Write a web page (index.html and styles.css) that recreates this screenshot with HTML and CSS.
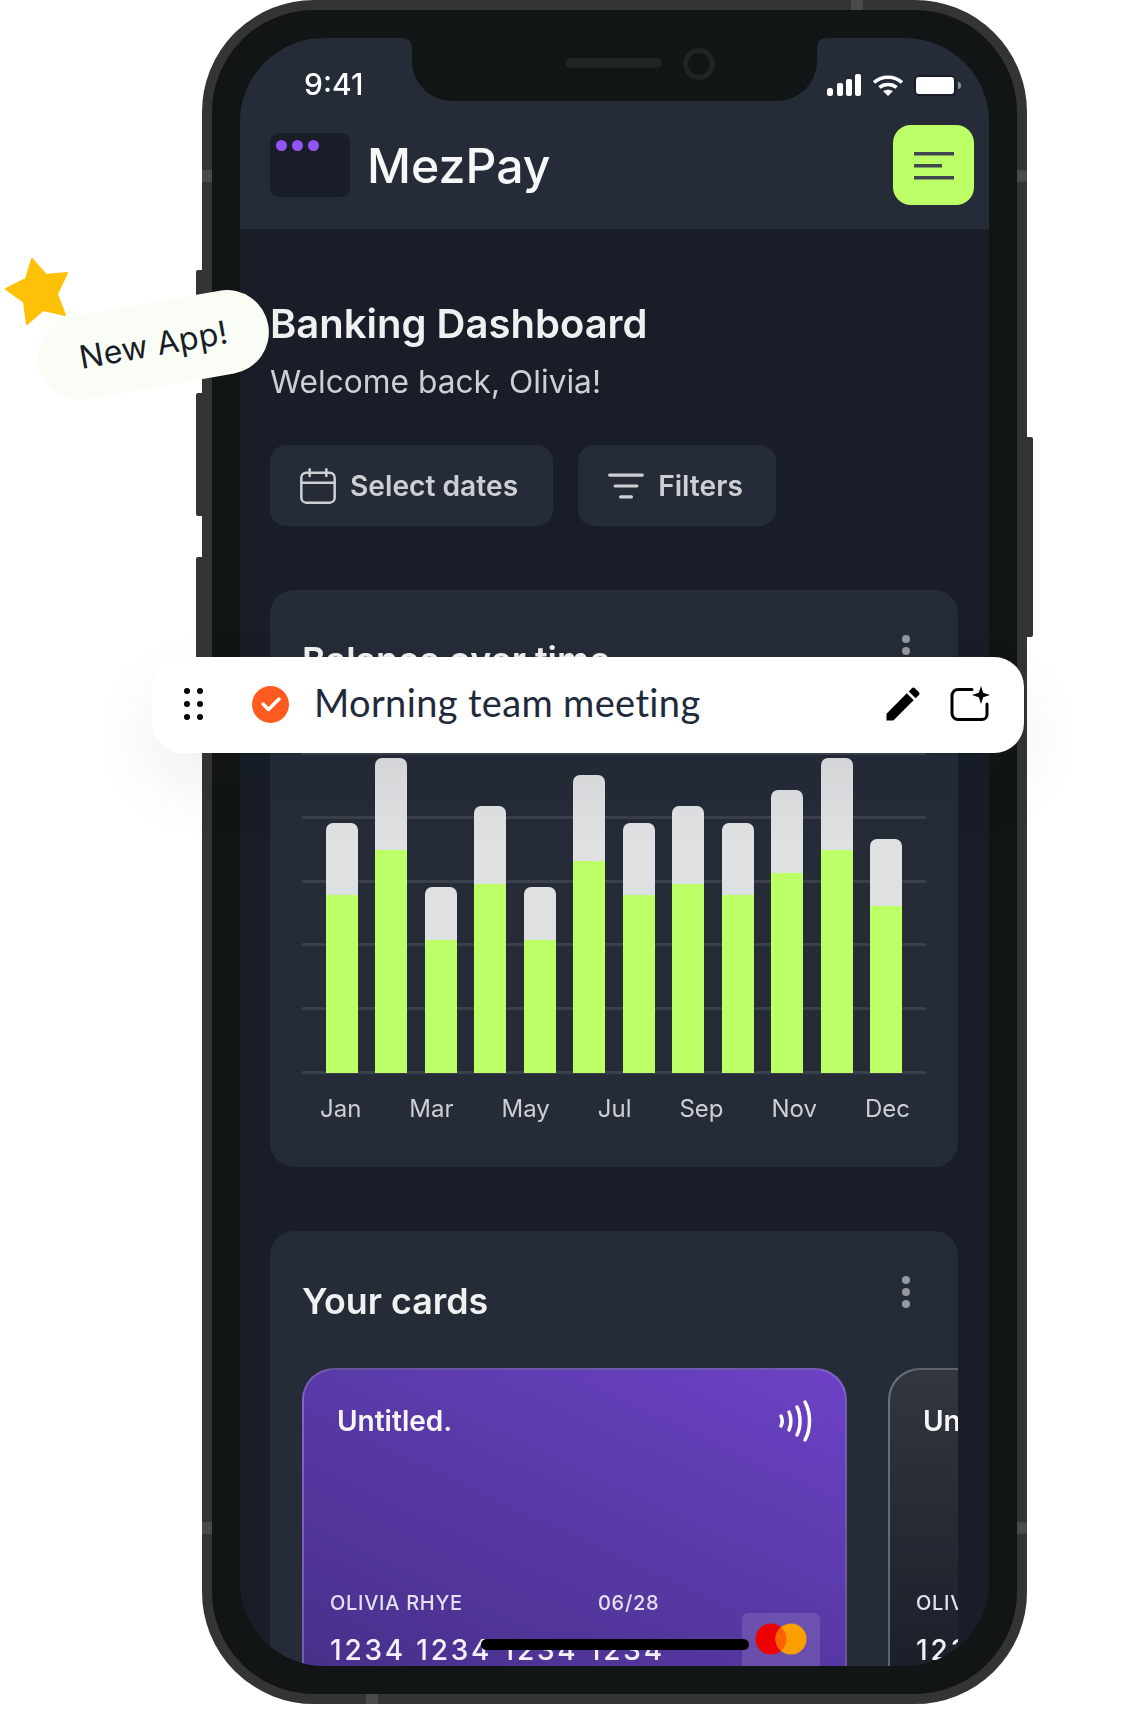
FILE: index.html
```html
<!doctype html>
<html lang="en">
  <head>
    <meta charset="UTF-8" />
    <meta name="viewport" content="width=device-width, initial-scale=1.0" />
    <link rel="stylesheet" href="styles.css">
    <title>MezPay</title>
  </head>
  <body>
    <div class="stage">
      <div class="phone">
        <span class="side side-a"></span>
        <span class="side side-b"></span>
        <span class="side side-c"></span>
        <span class="side side-d"></span>
        <span class="mark mark-top"></span>
        <span class="mark mark-bottom"></span>
        <span class="mark mark-l1"></span>
        <span class="mark mark-l2"></span>
        <span class="mark mark-r1"></span>
        <span class="mark mark-r2"></span>

        <div class="screen">
          <div class="notch">
            <span class="speaker"></span>
            <span class="camera"></span>
          </div>

          <header class="top">
            <div class="status">
              <span class="time">9:41</span>
              <div class="status-icons">
                <svg width="35" height="23" viewBox="0 0 35 23" fill="#fff">
                  <rect x="0" y="14" width="6" height="8" rx="2.5" />
                  <rect x="10" y="9" width="6" height="13" rx="2" />
                  <rect x="19" y="5" width="6" height="17" rx="2" />
                  <rect x="28" y="0" width="6" height="22" rx="2" />
                </svg>
                <svg width="32" height="23" viewBox="0 0 32 23" fill="none" stroke="#fff" stroke-width="3.6">
                  <path d="M2 8.500C9.500 1.500 22.500 1.500 30 8.500" />
                  <path d="M7.500 13.500C12 9.500 20 9.500 24.500 13.500" />
                  <path d="M16 22l-4.800-4.700c2.800-2 6.800-2 9.600 0L16 22z" fill="#fff" stroke="none" />
                </svg>
                <span class="battery"></span>
              </div>
            </div>
            <div class="brand-row">
              <div class="logo">
                <span></span><span></span><span></span>
              </div>
              <span class="brand">MezPay</span>
              <button class="menu">
                <svg width="40" height="30" viewBox="0 0 40 30" fill="#414651">
                  <rect x="0" y="2" width="40" height="3.500" />
                  <rect x="0" y="14" width="28" height="3.500" />
                  <rect x="0" y="26" width="40" height="3.500" />
                </svg>
              </button>
            </div>
          </header>

          <main class="content">
            <h1 class="title">Banking Dashboard</h1>
            <p class="subtitle">Welcome back, Olivia!</p>

            <div class="actions">
              <button class="action">
                <svg width="40" height="40" viewBox="0 0 24 24" fill="none" stroke="#cecfd2" stroke-width="1.500" stroke-linecap="round" stroke-linejoin="round">
                  <rect x="2" y="4" width="20" height="18" rx="3" />
                  <path d="M22 10H2M17 2v4M7 2v4" />
                </svg>
                Select dates
              </button>
              <button class="action">
                <svg width="40" height="40" viewBox="1 1 22 22" fill="none" stroke="#cecfd2" stroke-width="1.700" stroke-linecap="round">
                  <path d="M6 12h12M3 6h18M9 18h6" />
                </svg>
                Filters
              </button>
            </div>

            <section class="panel">
              <div class="panel-head">
                <h2 class="panel-title">Balance over time</h2>
                <span class="more"><i></i><i></i><i></i></span>
              </div>

              <div class="chart">
                <div class="grid">
                  <span></span><span></span><span></span><span></span><span></span><span></span>
                </div>
                <div class="bars">
                  <div class="bar" style="height:250px"><div class="fill" style="height:178px"></div></div>
                  <div class="bar" style="height:315px"><div class="fill" style="height:223px"></div></div>
                  <div class="bar" style="height:186px"><div class="fill" style="height:133px"></div></div>
                  <div class="bar" style="height:267px"><div class="fill" style="height:189px"></div></div>
                  <div class="bar" style="height:186px"><div class="fill" style="height:133px"></div></div>
                  <div class="bar" style="height:298px"><div class="fill" style="height:212px"></div></div>
                  <div class="bar" style="height:250px"><div class="fill" style="height:178px"></div></div>
                  <div class="bar" style="height:267px"><div class="fill" style="height:189px"></div></div>
                  <div class="bar" style="height:250px"><div class="fill" style="height:178px"></div></div>
                  <div class="bar" style="height:283px"><div class="fill" style="height:200px"></div></div>
                  <div class="bar" style="height:315px"><div class="fill" style="height:223px"></div></div>
                  <div class="bar" style="height:234px"><div class="fill" style="height:167px"></div></div>
                </div>
              </div>

              <div class="months">
                <span>Jan</span><span>Mar</span><span>May</span><span>Jul</span><span>Sep</span><span>Nov</span><span>Dec</span>
              </div>
            </section>

            <section class="panel panel-cards">
              <div class="panel-head">
                <h2 class="panel-title">Your cards</h2>
                <span class="more"><i></i><i></i><i></i></span>
              </div>

              <div class="cards">
                <div class="card card-purple">
                  <div class="card-top">
                    <span class="card-name">Untitled.</span>
                    <svg width="36" height="44" viewBox="0 0 36 44" fill="none" stroke="#fff" stroke-width="3.500" stroke-linecap="round">
                      <path d="M3 17c1.500 3 1.500 7 0 10" />
                      <path d="M11 13c2.500 5 2.500 13 0 18" />
                      <path d="M19 8c4 8 4 20 0 28" />
                      <path d="M27 3c6 11 6 27 0 38" />
                    </svg>
                  </div>
                  <div class="card-meta">
                    <span class="holder">OLIVIA RHYE</span>
                    <span>06/28</span>
                  </div>
                  <div class="card-number">1234 1234 1234 1234</div>
                  <div class="card-brand">
                    <svg width="52" height="32" viewBox="0 0 52 32">
                      <circle cx="16" cy="16" r="15.500" fill="#ee0000" />
                      <circle cx="36" cy="16" r="15.500" fill="#f9a000" />
                      <path d="M26 4.200a15.500 15.500 0 0 1 0 23.600a15.500 15.500 0 0 1 0-23.600z" fill="#ff6100" />
                    </svg>
                  </div>
                </div>

                <div class="card card-dark">
                  <div class="card-top">
                    <span class="card-name">Untitled.</span>
                  </div>
                  <div class="card-meta">
                    <span class="holder">OLIVIA RHYE</span>
                  </div>
                  <div class="card-number">1234 1234 1234 1234</div>
                </div>
              </div>
            </section>
          </main>

          <span class="home-bar"></span>
        </div>
      </div>

      <!-- floating bits on top of the phone -->
      <svg class="star" width="70" height="70" viewBox="0 0 70 70">
        <polygon points="32,19 46,35 67,33 57,54 65,75 43,70 27,84 24,62 6,49 26,39" fill="#ffc107" stroke="#ffc107" stroke-width="2" stroke-linejoin="round" transform="translate(0,-17)" />
      </svg>
      <div class="badge">New App!</div>

      <div class="task">
        <span class="grip">
          <i></i><i></i><i></i><i></i><i></i><i></i>
        </span>
        <span class="check">
          <svg width="22" height="16" viewBox="0 0 22 16" fill="none" stroke="#fff" stroke-width="3.500" stroke-linecap="round" stroke-linejoin="round">
            <path d="M3 8l5.500 5.500L19 3" />
          </svg>
        </span>
        <span class="task-text">Morning team meeting</span>
        <svg class="task-edit" width="44" height="44" viewBox="0 0 24 24" fill="#000">
          <path d="M3 17.250V21h3.750L17.810 9.940l-3.750-3.750L3 17.250zM20.710 7.040c.39-.39.39-1.020 0-1.410l-2.340-2.340c-.39-.39-1.020-.39-1.410 0l-1.830 1.830 3.750 3.750 1.830-1.830z" />
        </svg>
        <svg class="task-ai" width="40" height="36" viewBox="0 0 40 36" fill="none" stroke="#000" stroke-width="3" stroke-linecap="round">
          <path d="M22 3.500H8a6 6 0 0 0-6 6v18a6 6 0 0 0 6 6h24a5 5 0 0 0 5-5V18" />
          <path d="M31 0l2.200 6.800L40 9l-6.800 2.200L31 18l-2.200-6.800L22 9l6.800-2.200L31 0z" fill="#000" stroke="none" />
        </svg>
      </div>
    </div>
  </body>
</html>
```

FILE: styles.css
```css
* {
  box-sizing: border-box;
}

body {
  margin: 0;
  background: #fff;
  font-family: Inter, "Liberation Sans", sans-serif;
}

h1, h2, p {
  margin: 0;
}

button {
  border: 0;
  font-family: inherit;
}

.stage {
  position: relative;
  width: 1132px;
  height: 1709px;
  padding-left: 202px;
  overflow: hidden;
}

/* phone body */
.phone {
  position: relative;
  width: 825px;
  height: 1704px;
  padding: 28px;
  border: 10px solid #343434;
  border-radius: 112px;
  background: #121515;
}

.side {
  position: absolute;
  width: 6px;
  background: #343434;
  border-radius: 2px 0 0 2px;
}

.side-a { left: -16px; top: 260px; height: 70px; }
.side-b { left: -16px; top: 383px; height: 123px; }
.side-c { left: -16px; top: 547px; height: 130px; }
.side-d { right: -16px; top: 427px; height: 200px; border-radius: 0 2px 2px 0; }

.mark {
  position: absolute;
  background: #4a4a4a;
}

.mark-top { top: -10px; left: 639px; width: 12px; height: 10px; }
.mark-bottom { bottom: -10px; left: 154px; width: 12px; height: 10px; }
.mark-l1 { left: -10px; top: 160px; width: 10px; height: 12px; }
.mark-l2 { left: -10px; top: 1512px; width: 10px; height: 12px; }
.mark-r1 { right: -10px; top: 160px; width: 10px; height: 12px; }
.mark-r2 { right: -10px; top: 1512px; width: 10px; height: 12px; }

.screen {
  position: relative;
  width: 749px;
  height: 1628px;
  overflow: hidden;
  border-radius: 84px;
  background: #181d27;
  color: #f7f7f7;
}

.notch {
  position: absolute;
  top: 0;
  left: 172px;
  width: 405px;
  height: 63px;
  background: #121515;
  border-radius: 0 0 40px 40px;
  z-index: 2;
}

.notch::before,
.notch::after {
  content: "";
  position: absolute;
  top: 0;
  width: 9px;
  height: 9px;
}

.notch::before {
  left: -9px;
  background: radial-gradient(circle at 0 100%, transparent 8.500px, #121515 9px);
}

.notch::after {
  right: -9px;
  background: radial-gradient(circle at 100% 100%, transparent 8.500px, #121515 9px);
}

.speaker {
  position: absolute;
  left: 153px;
  top: 20px;
  width: 97px;
  height: 10px;
  border-radius: 5px;
  background: #202424;
}

.camera {
  position: absolute;
  left: 271px;
  top: 10px;
  width: 32px;
  height: 32px;
  border: 5px solid #202424;
  border-radius: 50%;
}

.top {
  height: 191px;
  padding: 0 15px 0 30px;
  background: #252b37;
  filter: blur(0.5px);
}

.status {
  display: flex;
  align-items: center;
  justify-content: space-between;
  height: 87px;
  padding: 0 18px 0 34px;
}

.time {
  margin-top: 4px;
  font-size: 30px;
  font-weight: 500;
  color: #fff;
}

.status-icons {
  display: flex;
  align-items: center;
  gap: 10px;
  margin-top: 8px;
}

.battery {
  position: relative;
  width: 42px;
  height: 21px;
  border: 2px solid #181d27;
  border-radius: 5px;
  background: #fff;
}

.battery::after {
  content: "";
  position: absolute;
  right: -7px;
  top: 5px;
  width: 3px;
  height: 7px;
  border-radius: 0 3px 3px 0;
  background: #8a8d96;
}

.brand-row {
  display: flex;
  align-items: center;
}

.logo {
  display: flex;
  gap: 5px;
  width: 80px;
  height: 64px;
  padding: 7px 6px;
  border-radius: 9px;
  background: #181d27;
}

.logo span {
  width: 11px;
  height: 11px;
  border-radius: 50%;
  background: #9155f7;
}

.brand {
  margin-left: 17px;
  font-size: 48.200px;
  font-weight: 500;
  color: #f7f7f7;
}

.menu {
  display: flex;
  align-items: center;
  justify-content: center;
  width: 81px;
  height: 80px;
  margin-left: auto;
  border-radius: 18px;
  background: #bdff66;
}

.content {
  padding: 65px 31px 0 30px;
  filter: blur(0.5px);
}

.title {
  font-size: 40px;
  font-weight: 600;
  line-height: 60px;
  color: #f0f0f1;
}

.subtitle {
  margin-top: 6px;
  font-size: 31.700px;
  line-height: 44px;
  color: #cecfd2;
}

.actions {
  display: flex;
  gap: 25px;
  margin-top: 41px;
}

.action {
  display: flex;
  align-items: center;
  gap: 12px;
  height: 81px;
  padding: 0 35px 0 28px;
  border-radius: 16px;
  background: #252b37;
  color: #cecfd2;
  font-size: 28.200px;
  font-weight: 600;
}

.action:last-child {
  padding-right: 33px;
}

.panel {
  margin-top: 64px;
  padding: 0 32px;
  border-radius: 24px;
  background: #252b37;
  height: 577px;
}

.panel-cards {
  height: 500px;
  overflow: hidden;
}

.panel-head {
  display: flex;
  align-items: flex-start;
  justify-content: space-between;
  height: 137px;
  padding: 44px 16px 0 0;
}

.panel-title {
  font-size: 35.800px;
  font-weight: 600;
  line-height: 52px;
  color: #f0f0f1;
}

.more {
  display: flex;
  flex-direction: column;
  gap: 4px;
  margin-top: 1px;
}

.more i {
  width: 8px;
  height: 8px;
  border-radius: 50%;
  background: #94979c;
}

.chart {
  position: relative;
  height: 322px;
  margin-top: 25px;
}

.grid {
  position: absolute;
  inset: 0;
  display: flex;
  flex-direction: column;
  justify-content: space-between;
}

.grid span {
  height: 3px;
  background: #3a3f4b;
}

.bars {
  position: absolute;
  left: 24px;
  right: 24px;
  bottom: 1px;
  display: flex;
  align-items: flex-end;
  justify-content: space-between;
}

.bar {
  display: flex;
  flex-direction: column;
  justify-content: flex-end;
  width: 32px;
  overflow: hidden;
  border-radius: 7px 7px 0 0;
  background: #dfe0e2;
}

.fill {
  background: #bdff66;
}

.months {
  display: flex;
  justify-content: space-between;
  margin-top: 19px;
  padding: 0 16px 0 18px;
  font-size: 24px;
  line-height: 32px;
  color: #cecfd2;
}

.cards {
  display: flex;
  gap: 41px;
  width: 700px;
}

.card {
  position: relative;
  flex: none;
  width: 545px;
  height: 344px;
  padding: 29px 27px 0 26px;
  border: 2px solid rgba(255, 255, 255, 0.18);
  border-radius: 32px;
  color: #f7f7f7;
}

.card-purple {
  background: linear-gradient(25deg, #452e85 0%, #5a3aa9 60%, #6d42c7 100%);
}

.card-dark {
  background: linear-gradient(180deg, #31363f 0%, #181c26 100%);
  border-color: rgba(255, 255, 255, 0.3);
}

.card-top {
  display: flex;
  align-items: center;
  justify-content: space-between;
  height: 44px;
  padding: 0 4px 0 7px;
}

.card-name {
  font-size: 28px;
  font-weight: 600;
}

.card-meta {
  display: flex;
  margin-top: 146px;
  font-size: 20px;
  font-weight: 500;
  line-height: 28px;
  letter-spacing: 0.7px;
  color: #e4e1f0;
}

.holder {
  width: 268px;
}

.card-number {
  margin-top: 15px;
  font-size: 28px;
  font-weight: 500;
  line-height: 36px;
  letter-spacing: 2.800px;
  white-space: nowrap;
  color: #f2f0f8;
}

.card-brand {
  position: absolute;
  right: 25px;
  top: 243px;
  display: flex;
  justify-content: center;
  width: 78px;
  height: 80px;
  padding-top: 10px;
  border-radius: 6px;
  background: rgba(255, 255, 255, 0.12);
}

.home-bar {
  position: absolute;
  left: 241px;
  top: 1601px;
  width: 268px;
  height: 11px;
  border-radius: 6px;
  background: #000;
}

/* floating */
.star {
  position: absolute;
  left: 0;
  top: 257px;
}

.badge {
  position: absolute;
  left: 37px;
  top: 303px;
  width: 233px;
  height: 84px;
  border-radius: 42px;
  background: #fafdf5;
  color: #181d27;
  font-size: 32px;
  font-weight: 400;
  letter-spacing: 0.300px;
  line-height: 84px;
  text-align: center;
  transform: rotate(-10deg);
}

.task {
  position: absolute;
  left: 152px;
  top: 657px;
  display: flex;
  align-items: center;
  width: 872px;
  height: 96px;
  padding: 0 34px 2px 32px;
  border-radius: 30px;
  background: #fff;
  box-shadow: 0 30px 70px rgba(16, 24, 40, 0.07);
}

.grip {
  display: grid;
  grid-template-columns: repeat(2, 6px);
  gap: 7px;
  width: 19px;
}

.grip i {
  width: 6px;
  height: 6px;
  border-radius: 50%;
  background: #000;
}

.check {
  display: flex;
  align-items: center;
  justify-content: center;
  width: 37px;
  height: 37px;
  margin-left: 49px;
  border-radius: 50%;
  background: #ff5a1f;
}

.task-text {
  margin-left: 25px;
  padding-bottom: 4px;
  font-family: Lato, sans-serif;
  font-size: 38px;
  letter-spacing: 0.350px;
  color: #1f2a3c;
}

.task-edit {
  margin-left: auto;
}

.task-ai {
  margin-left: 25px;
}
```
